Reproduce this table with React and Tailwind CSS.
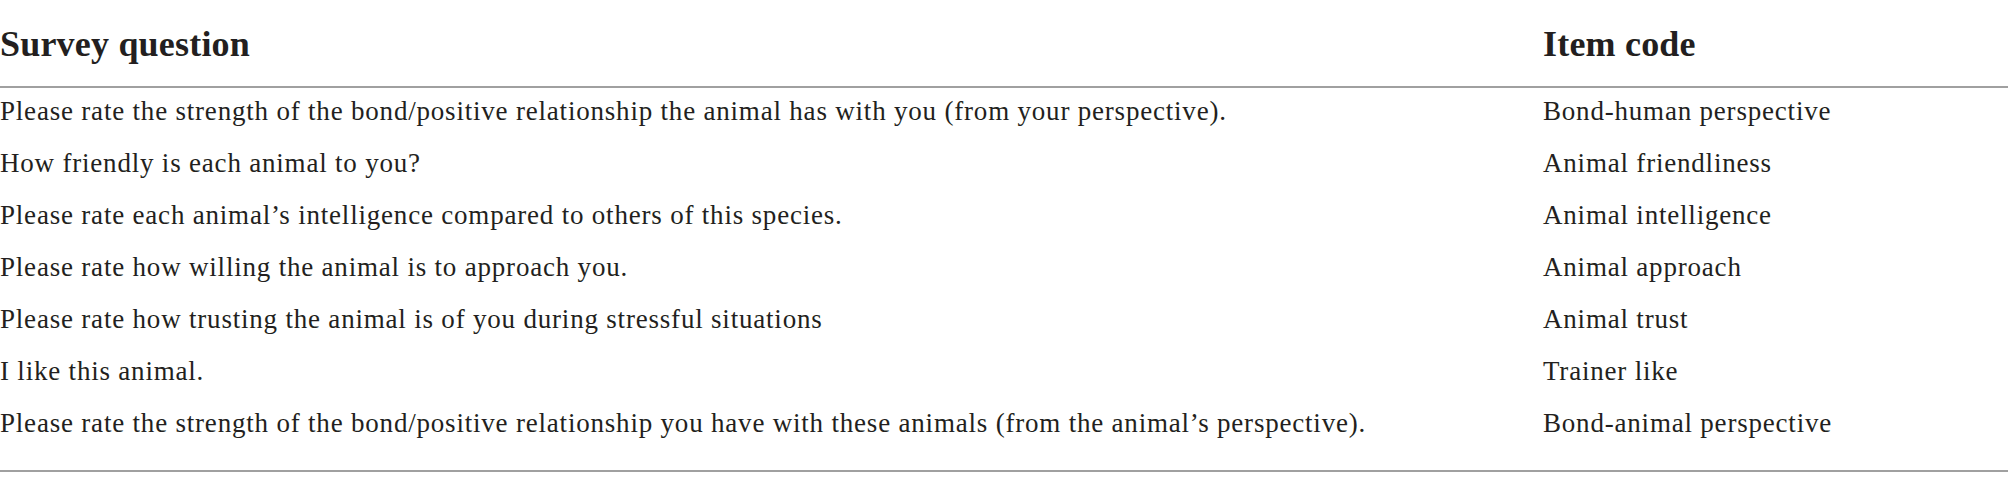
import React from "react";

const rows = [
  ["Please rate the strength of the bond/positive relationship the animal has with you (from your perspective).", "Bond-human perspective"],
  ["How friendly is each animal to you?", "Animal friendliness"],
  ["Please rate each animal\u2019s intelligence compared to others of this species.", "Animal intelligence"],
  ["Please rate how willing the animal is to approach you.", "Animal approach"],
  ["Please rate how trusting the animal is of you during stressful situations", "Animal trust"],
  ["I like this animal.", "Trainer like"],
  ["Please rate the strength of the bond/positive relationship you have with these animals (from the animal\u2019s perspective).", "Bond-animal perspective"],
];

export default function App() {
  return (
    <div className="w-[2008px] h-[488px] bg-white text-[#231f20] font-['Liberation_Serif',serif]">
      <div className="flex h-[86px] items-center text-[36px] font-bold tracking-[0.2px] pt-[2px]">
        <div className="w-[1543px]">Survey question</div>
        <div className="flex-1">Item code</div>
      </div>
      <div className="border-t-2 border-b-2 border-[#a0a0a0] pb-[18px]">
        {rows.map(([q, c], i) => (
          <div key={i} className="flex h-[52px] items-center text-[27px] tracking-[0.8px] pb-[5px]">
            <div className="w-[1543px]">{q}</div>
            <div className="flex-1">{c}</div>
          </div>
        ))}
      </div>
    </div>
  );
}
